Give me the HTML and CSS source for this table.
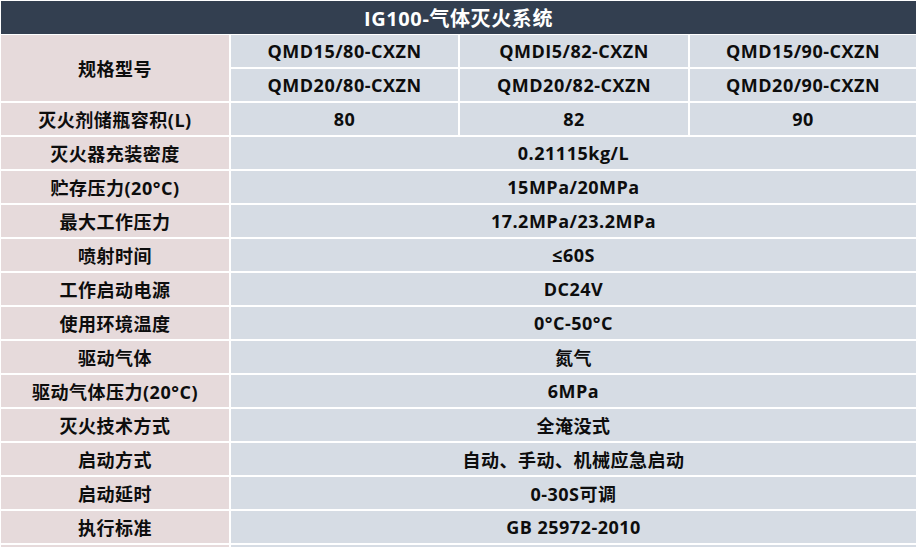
FILE: index.html
```html
<!DOCTYPE html>
<html lang="zh-CN">
<head>
<meta charset="utf-8">
<title>IG100-气体灭火系统</title>
<link rel="stylesheet" href="styles.css">
</head>
<body>
<div class="sheet">
  <div class="title">IG100-气体灭火系统</div>

  <div class="label span-rows">规格型号</div>
  <div class="val">QMD15/80-CXZN</div>
  <div class="val">QMDI5/82-CXZN</div>
  <div class="val">QMD15/90-CXZN</div>
  <div class="val">QMD20/80-CXZN</div>
  <div class="val">QMD20/82-CXZN</div>
  <div class="val">QMD20/90-CXZN</div>

  <div class="label">灭火剂储瓶容积(L)</div>
  <div class="val">80</div>
  <div class="val">82</div>
  <div class="val">90</div>

  <div class="label">灭火器充装密度</div>
  <div class="val wide">0.21115kg/L</div>

  <div class="label">贮存压力(20°C)</div>
  <div class="val wide">15MPa/20MPa</div>

  <div class="label">最大工作压力</div>
  <div class="val wide">17.2MPa/23.2MPa</div>

  <div class="label">喷射时间</div>
  <div class="val wide">≤60S</div>

  <div class="label">工作启动电源</div>
  <div class="val wide">DC24V</div>

  <div class="label">使用环境温度</div>
  <div class="val wide">0°C-50°C</div>

  <div class="label">驱动气体</div>
  <div class="val wide">氮气</div>

  <div class="label">驱动气体压力(20°C)</div>
  <div class="val wide">6MPa</div>

  <div class="label">灭火技术方式</div>
  <div class="val wide">全淹没式</div>

  <div class="label">启动方式</div>
  <div class="val wide">自动、手动、机械应急启动</div>

  <div class="label">启动延时</div>
  <div class="val wide">0-30S可调</div>

  <div class="label">执行标准</div>
  <div class="val wide">GB 25972-2010</div>

  <div class="label"></div>
  <div class="val wide"></div>
</div>
</body>
</html>
```

FILE: styles.css
```css
html, body {
  margin: 0;
  padding: 0;
  overflow: hidden;
  background: #ffffff;
}

.sheet {
  display: grid;
  grid-template-columns: 228px 227px 228px 226px;
  grid-auto-rows: 32px;
  gap: 2px;
  padding: 1px 2px 0 1px;
  width: 918px;
  height: 547px;
  overflow: hidden;
  box-sizing: border-box;
  background: #ffffff;
  font-family: "Open Sans", "Noto Sans CJK SC", sans-serif;
  font-weight: 700;
  color: #0d0d0d;
}

.title {
  grid-column: 1 / 5;
  height: 33px;
  margin-bottom: -1px;
  background: #333f50;
  color: #ffffff;
  font-size: 20px;
  display: flex;
  align-items: center;
  justify-content: center;
  letter-spacing: 0.6px;
}

.label,
.val {
  display: flex;
  align-items: center;
  justify-content: center;
  font-size: 18px;
  letter-spacing: 0.5px;
  white-space: nowrap;
}

.label {
  background: #e6dadb;
}

.val {
  background: #d6dce4;
}

.span-rows {
  grid-row: span 2;
}

.wide {
  grid-column: 2 / 5;
}
```
